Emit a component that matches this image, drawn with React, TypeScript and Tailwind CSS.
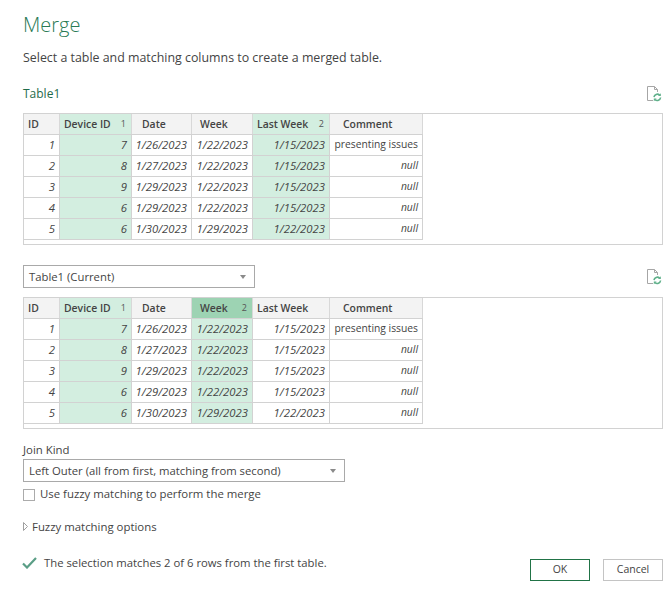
import React from "react";

const rows = [
  ["1", "7", "1/26/2023", "1/22/2023", "1/15/2023", "presenting issues"],
  ["2", "8", "1/27/2023", "1/22/2023", "1/15/2023", "null"],
  ["3", "9", "1/29/2023", "1/22/2023", "1/15/2023", "null"],
  ["4", "6", "1/29/2023", "1/22/2023", "1/15/2023", "null"],
  ["5", "6", "1/30/2023", "1/29/2023", "1/22/2023", "null"],
];
const headers = ["ID", "Device ID", "Date", "Week", "Last Week", "Comment"];
const widths = ["w-[36px]", "w-[72px]", "w-[60px]", "w-[61px]", "w-[77px]", "w-[93px]"];
const headPad = ["pl-[4px]", "pl-[4px]", "pl-[10px]", "pl-[8px]", "pl-[4px]", "pl-[13px]"];

function RefreshDoc() {
  return (
    <svg className="mr-[1px]" width="16" height="17" viewBox="0 0 16 17" fill="none">
      <path d="M1.5 1.5H8.5L11.5 4.5V7M8.5 1.5V4.5H11.5M7 15.5H1.5V1.5" stroke="#a6a6a6" strokeWidth="1" />
      <path d="M8 12.2A3.4 3.4 0 0 1 13.6 10" stroke="#5fb08a" strokeWidth="1.6" />
      <path d="M14.6 12.5A3.4 3.4 0 0 1 9 14.6" stroke="#5fb08a" strokeWidth="1.6" />
      <path d="M14.8 8.2V11H12Z" fill="#5fb08a" />
      <path d="M7.8 16.2V13.4H10.6Z" fill="#5fb08a" />
    </svg>
  );
}

function Chevron() {
  return (
    <svg width="6" height="4" viewBox="0 0 6 4">
      <path d="M0 0H6L3 4Z" fill="#8a8a8a" />
    </svg>
  );
}

function DataTable({ selected, active }: { selected: Record<number, string>; active?: number }) {
  return (
    <div className="h-[132px] border border-[#d2d2d2]">
      <div className="flex h-[20px]">
        {headers.map((h, i) => {
          const isSel = selected[i] !== undefined;
          const bg = i === active ? "bg-[#9dd3b3]" : isSel ? "bg-[#d3eee0]" : "bg-[#f3f3f3]";
          return (
            <div
              key={h}
              className={`relative flex h-[20px] items-center border-r border-[#d8d8d8] pt-[1px] text-[10.4px] font-semibold text-[#444] ${widths[i]} ${headPad[i]} ${bg}`}
            >
              <span>{h}</span>
              {isSel && (
                <span className="absolute right-[5px] top-[3px] text-[9px] font-normal text-[#555]">{selected[i]}</span>
              )}
            </div>
          );
        })}
      </div>
      {rows.map((r, ri) => (
        <div key={r[0]} className="flex">
          {r.map((c, i) => {
            const isSel = selected[i] !== undefined;
            const plain = c === "presenting issues";
            const small = plain || c === "null";
            return (
              <div
                key={i}
                className={`flex items-center justify-end whitespace-nowrap border-t border-r border-[#d2d2d2] pr-[4px] text-[#444] ${widths[i]} ${ri === 4 ? "h-[22px] border-b" : "h-[21px]"} ${isSel ? "bg-[#d3eee0]" : "bg-white"} ${plain ? "" : "italic"} ${small ? "text-[10.3px]" : ""}`}
              >
                {c}
              </div>
            );
          })}
        </div>
      ))}
    </div>
  );
}

function Select({ label, className }: { label: string; className: string }) {
  return (
    <div className={`flex h-[23px] items-center justify-between border border-[#a9a9a9] pl-[5px] pr-[8px] text-[11.3px] text-[#444] ${className}`}>
      <span className="pt-[1px]">{label}</span>
      <Chevron />
    </div>
  );
}

export default function App() {
  return (
    <div
      className="flex h-[596px] w-[670px] flex-col bg-white pl-[23px] pr-[7px] text-[11.3px] text-[#444]"
      style={{ fontFamily: '"Open Sans", "Noto Sans", sans-serif' }}
    >
      <h1 className="mt-[11px] h-[28px] text-[20px] font-light leading-[28px] text-[#2a7a55]">Merge</h1>
      <p className="mt-[9px] h-[20px] text-[12.4px] leading-[20px]">Select a table and matching columns to create a merged table.</p>
      <div className="mt-[15px] flex h-[20px] items-center justify-between">
        <span className="pt-[2px] text-[12px] text-[#1f6b4a]">Table1</span>
        <RefreshDoc />
      </div>
      <div className="mt-[10px]">
        <DataTable selected={{ 1: "1", 4: "2" }} />
      </div>
      <div className="mt-[20px] flex items-center justify-between">
        <Select label="Table1 (Current)" className="w-[232px]" />
        <RefreshDoc />
      </div>
      <div className="mt-[9px]">
        <DataTable selected={{ 1: "1", 3: "2" }} active={3} />
      </div>
      <div className="mt-[12px] mb-[1px] h-[17px] text-[11.4px] leading-[17px]">Join Kind</div>
      <Select label="Left Outer (all from first, matching from second)" className="w-[322px]" />
      <label className="mt-[6px] flex h-[13px] items-center gap-[5px] text-[11.4px]">
        <span className="h-[12px] w-[12px] border border-[#ababab]" />
        <span className="-mt-[1px]">Use fuzzy matching to perform the merge</span>
      </label>
      <div className="mt-[17px] flex h-[17px] items-center gap-[4px] text-[11.4px]">
        <svg width="5" height="9" viewBox="0 0 5 9">
          <path d="M0.5 0.5L4.5 4.5L0.5 8.5Z" fill="none" stroke="#a0a0a0" />
        </svg>
        <span>Fuzzy matching options</span>
      </div>
      <div className="mt-[20px] flex items-start justify-between">
        <div className="flex h-[16px] items-center gap-[7px] text-[11.3px]">
          <svg className="-ml-[1px]" width="15" height="12" viewBox="0 0 15 12">
            <path d="M1 6.5L5 10.5L14 1" fill="none" stroke="#5a9e86" strokeWidth="2.2" />
          </svg>
          <span>The selection matches 2 of 6 rows from the first table.</span>
        </div>
        <div className="mt-[4px] flex gap-[13px]">
          <button className="h-[22px] w-[60px] border border-[#217346] text-[10.5px] text-[#444]">OK</button>
          <button className="h-[22px] w-[60px] border border-[#c4c4c4] text-[10.5px] text-[#444]">Cancel</button>
        </div>
      </div>
    </div>
  );
}
